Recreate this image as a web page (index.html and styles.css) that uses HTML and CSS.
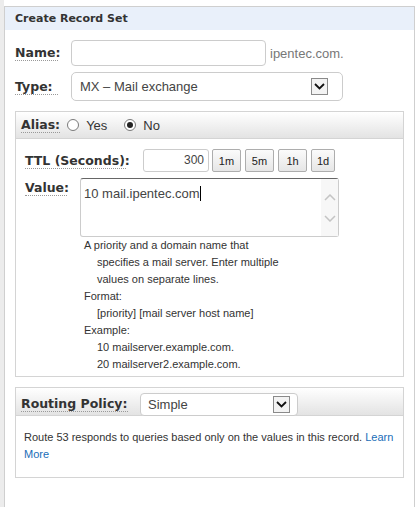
FILE: index.html
```html
<!DOCTYPE html>
<html>
<head>
<meta charset="utf-8">
<link rel="stylesheet" href="styles.css">
</head>
<body>
<div class="panel">
  <div class="panel-head">Create Record Set</div>
  <div class="row row-name">
    <span class="label lbl-main">Name:</span>
    <div class="input name-input"></div>
    <span class="suffix">ipentec.com.</span>
  </div>
  <div class="row row-type">
    <span class="label lbl-main">Type:</span>
    <div class="select type-select">
      <span class="select-text">MX – Mail exchange</span>
      <span class="drop"><svg width="11" height="7" viewBox="0 0 11 7"><path d="M1 1 L5.5 5.5 L10 1" fill="none" stroke="#111" stroke-width="1.8"/></svg></span>
    </div>
  </div>

  <div class="box">
    <div class="box-head">
      <span class="label">Alias:</span>
      <span class="radio"></span><span class="rlabel">Yes</span>
      <span class="radio checked"></span><span class="rlabel">No</span>
    </div>
    <div class="box-body">
      <div class="row row-ttl">
        <span class="label lbl-ttl">TTL (Seconds):</span>
        <div class="input ttl-input">300</div>
        <div class="btns">
          <span class="btn">1m</span>
          <span class="btn">5m</span>
          <span class="btn">1h</span>
          <span class="btn">1d</span>
        </div>
      </div>
      <div class="row row-value">
        <span class="label lbl-value">Value:</span>
        <div class="textarea">
          <div class="ta-text">10 mail.ipentec.com<span class="caret"></span></div>
          <div class="ta-scroll">
            <svg width="12" height="7" viewBox="0 0 12 7"><path d="M1 6 L6 1 L11 6" fill="none" stroke="#c4c4c4" stroke-width="1.5"/></svg>
            <svg width="12" height="7" viewBox="0 0 12 7"><path d="M1 1 L6 6 L11 1" fill="none" stroke="#c4c4c4" stroke-width="1.5"/></svg>
          </div>
        </div>
      </div>
      <div class="help">
        <div>A priority and a domain name that</div>
        <div class="ind">specifies a mail server. Enter multiple</div>
        <div class="ind">values on separate lines.</div>
        <div>Format:</div>
        <div class="ind">[priority] [mail server host name]</div>
        <div>Example:</div>
        <div class="ind">10 mailserver.example.com.</div>
        <div class="ind">20 mailserver2.example.com.</div>
      </div>
    </div>
  </div>

  <div class="box box-routing">
    <div class="box-head routing-head">
      <span class="label">Routing Policy:</span>
      <div class="select routing-select">
        <span class="select-text">Simple</span>
        <span class="drop"><svg width="11" height="7" viewBox="0 0 11 7"><path d="M1 1 L5.5 5.5 L10 1" fill="none" stroke="#111" stroke-width="1.8"/></svg></span>
      </div>
    </div>
    <div class="routing-body">Route 53 responds to queries based only on the values in this record. <a class="link">Learn More</a></div>
  </div>
</div>
</body>
</html>
```

FILE: styles.css
```css
html, body {
  margin: 0;
  padding: 0;
}
body {
  background: linear-gradient(to right, #ececec 4px, #ffffff 4px);
  font-family: "Liberation Sans", Arial, sans-serif;
  color: #333;
  height: 507px;
  overflow: hidden;
}
.panel {
  margin: 6px 0 0 4px;
  width: 409px;
  height: 520px;
  border: 1px solid #cfcfcf;
  background: #fff;
}
.panel-head {
  height: 23px;
  line-height: 23px;
  background: #e9f0fa;
  padding-left: 10px;
  font-family: "DejaVu Sans", Verdana, sans-serif;
  font-weight: bold;
  font-size: 11px;
  color: #333;
}
.label {
  font-family: "DejaVu Sans", Verdana, sans-serif;
  font-weight: bold;
  font-size: 12.5px;
  color: #333;
  border-bottom: 1px dotted #999;
  line-height: 15px;
  white-space: nowrap;
}
.row {
  display: flex;
  align-items: center;
}
.row-name {
  margin-top: 10px;
  padding-left: 10px;
}
.lbl-main {
  width: 43px;
  margin-right: 13px;
  flex: none;
}
.input {
  box-sizing: border-box;
  border: 1px solid #cccccc;
  border-radius: 4px;
  background: #fff;
}
.name-input {
  width: 195px;
  height: 26px;
}
.suffix {
  margin-left: 4px;
  font-size: 13px;
  color: #777;
}
.row-type {
  margin-top: 6px;
  padding-left: 10px;
}
.select {
  box-sizing: border-box;
  border: 1px solid #cccccc;
  border-radius: 5px;
  background: #fff;
  display: flex;
  align-items: center;
}
.type-select {
  width: 272px;
  height: 29px;
  padding: 0 14px 0 8px;
}
.select-text {
  flex: 1;
  font-size: 13px;
  color: #444;
}
.drop {
  box-sizing: border-box;
  width: 17px;
  height: 17px;
  border: 1px solid #8a8a8a;
  background: #f3f3f3;
  display: flex;
  align-items: center;
  justify-content: center;
}
.box {
  margin: 10px 10px 0 10px;
  border: 1px solid #d4d4d4;
}
.box-head {
  box-sizing: border-box;
  height: 27px;
  background: linear-gradient(to bottom, #ffffff, #e3e3e3);
  border-bottom: 1px solid #d4d4d4;
  display: flex;
  align-items: center;
  padding-left: 5px;
}
.radio {
  box-sizing: border-box;
  width: 12px;
  height: 12px;
  border: 1px solid #7a7a7a;
  border-radius: 50%;
  background: #fff;
  margin-left: 7px;
  display: flex;
  align-items: center;
  justify-content: center;
}
.rlabel {
  font-size: 13px;
  color: #333;
  margin-left: 7px;
}
.rlabel + .radio {
  margin-left: 17px;
}
.radio.checked::after {
  content: "";
  width: 6px;
  height: 6px;
  border-radius: 50%;
  background: #222;
}
.box-body {
  padding: 10px 0 3px 9px;
}
.row-ttl {
  height: 23px;
}
.lbl-ttl {
  flex: none;
  width: 101px;
  margin-right: 17px;
}
.ttl-input {
  width: 66px;
  height: 23px;
  text-align: right;
  font-size: 12px;
  line-height: 21px;
  padding-right: 4px;
  color: #444;
  border-radius: 3px;
}
.btns {
  display: flex;
  gap: 4px;
  margin-left: 3px;
}
.btn {
  box-sizing: border-box;
  width: 29px;
  height: 23px;
  border: 1px solid #adadad;
  border-radius: 2px;
  background: linear-gradient(to bottom, #fbfbfb, #e6e6e6);
  font-size: 11px;
  color: #222;
  display: flex;
  align-items: center;
  justify-content: center;
}
.btns .btn:last-child {
  width: 24px;
}
.row-value {
  margin-top: 6px;
  align-items: flex-start;
}
.lbl-value {
  width: 42px;
  margin-right: 13px;
  margin-top: 2px;
  flex: none;
}
.textarea {
  box-sizing: border-box;
  width: 259px;
  height: 59px;
  border: 1px solid #cccccc;
  border-top-color: #666;
  border-radius: 3px;
  display: flex;
}
.ta-text {
  flex: 1;
  font-size: 13px;
  color: #444;
  padding: 7px 0 0 3px;
  line-height: 15px;
}
.caret {
  display: inline-block;
  width: 1px;
  height: 15px;
  background: #000;
  vertical-align: -3px;
}
.ta-scroll {
  width: 17px;
  background: #f7f7f7;
  display: flex;
  flex-direction: column;
  align-items: center;
  padding-top: 15px;
  gap: 14px;
}
.help {
  margin: 0 0 0 59px;
  font-size: 11px;
  line-height: 17px;
  color: #333;
}
.help .ind {
  padding-left: 13px;
}
.routing-head {
  height: 28px;
  padding-top: 5px;
  align-items: flex-start;
}
.routing-head .label {
  margin-top: 3px;
  width: 107px;
  margin-right: 12px;
}
.routing-select {
  width: 158px;
  height: 23px;
  padding: 0 7px 0 7px;
  border-radius: 4px;
}
.routing-body {
  padding: 13px 8px 0 8px;
  height: 48px;
  font-size: 11px;
  line-height: 17px;
  color: #333;
}
.link {
  color: #1a6eb8;
}
```
